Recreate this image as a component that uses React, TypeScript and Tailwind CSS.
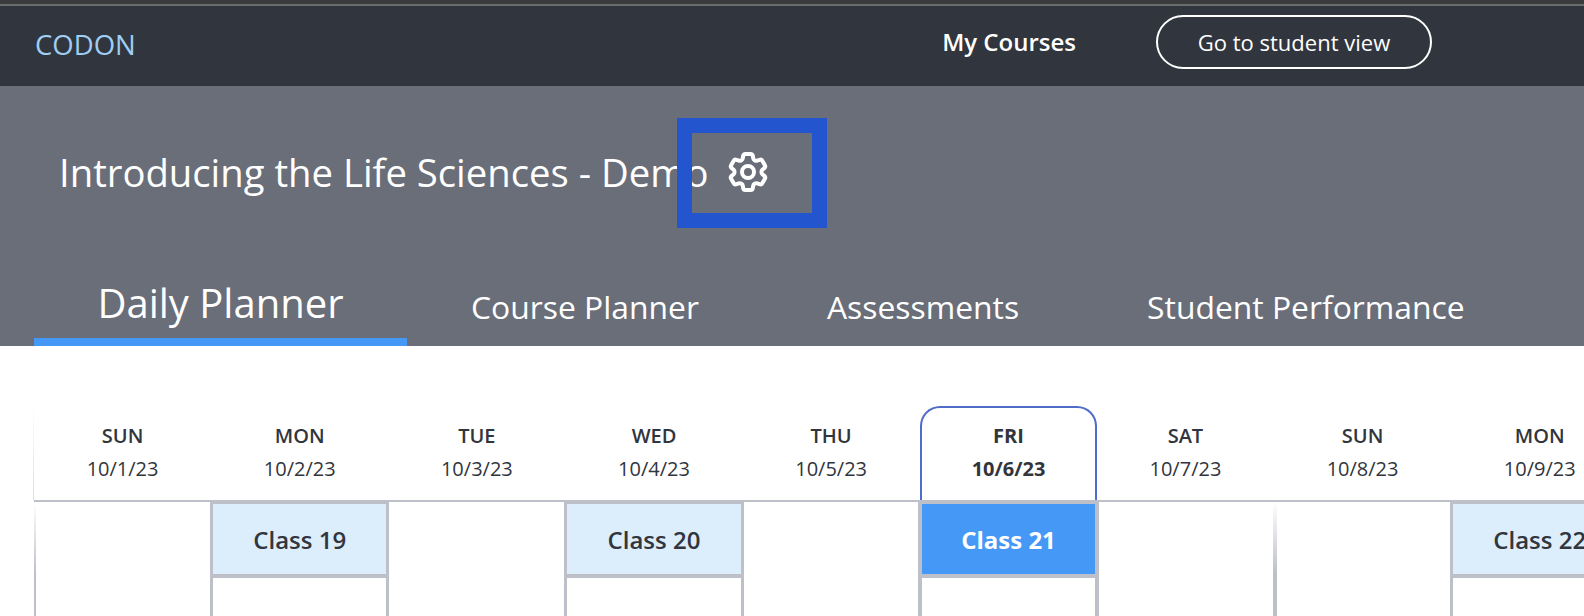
import { HiOutlineCog6Tooth } from 'react-icons/hi2';
import clsx from 'clsx';

type Day = {
  name: string;
  date: string;
  session?: string;
  current?: boolean;
  fade?: 'thin' | 'wide';
};

const days: Day[] = [
  { name: 'SUN', date: '10/1/23', fade: 'thin' },
  { name: 'MON', date: '10/2/23', session: 'Class 19' },
  { name: 'TUE', date: '10/3/23' },
  { name: 'WED', date: '10/4/23', session: 'Class 20' },
  { name: 'THU', date: '10/5/23' },
  { name: 'FRI', date: '10/6/23', session: 'Class 21', current: true },
  { name: 'SAT', date: '10/7/23' },
  { name: 'SUN', date: '10/8/23', fade: 'wide' },
  { name: 'MON', date: '10/9/23', session: 'Class 22' },
];

const tabs = ['Course Planner', 'Assessments', 'Student Performance'];

function DayHead({ day }: { day: Day }) {
  return (
    <div
      className={clsx(
        'w-[177.15px] shrink-0 h-[94px] flex flex-col items-center text-[#31353d] box-border',
        day.current
          ? 'border-2 border-b-0 border-[#4f6cc9] rounded-t-[20px] pt-[16px] bg-white ml-[0.25px] -mr-[0.25px]'
          : 'pt-[18px]'
      )}
    >
      <div className={clsx('text-[20px] leading-[24px]', day.current ? 'font-bold' : 'font-semibold')}>
        {day.name}
      </div>
      <div className={clsx('text-[20px] leading-[24px] mt-[9px]', day.current && 'font-bold')}>
        {day.date}
      </div>
    </div>
  );
}

function DayBody({ day }: { day: Day }) {
  if (!day.session) {
    return (
      <div className="w-[177.15px] shrink-0 relative h-full">
        {day.fade && (
          <div
            className={clsx(
              'absolute top-0 bottom-0 bg-gradient-to-b from-white to-[#bdc0c9] to-60%',
              day.fade === 'thin' ? 'left-0 w-[2px]' : '-left-[1px] w-[4px]'
            )}
          />
        )}
      </div>
    );
  }
  return (
    <div
      className={clsx(
        'shrink-0 h-full box-border',
        day.current
          ? 'w-[181.15px] -ml-[1.75px] -mr-[2.25px] border-x-[4px] border-[#bdc0c9]'
          : 'w-[179.15px] -ml-[1px] -mr-[1px] border-x-[3px] border-[#bdc0c9]'
      )}
    >
      <div
        className={clsx(
          'h-[77px] -mt-[1px] pt-[1px] flex items-center justify-center border-t-[3px] border-b-[4px] border-[#bdc0c9] text-[24px]',
          day.current
            ? 'bg-[#4598f6] text-white font-bold'
            : 'bg-[#dcedfc] text-[#31353d] font-semibold'
        )}
      >
        {day.session}
      </div>
    </div>
  );
}

export default function App() {
  return (
    <div className="w-[1584px] h-[616px] overflow-hidden bg-white relative font-['Open_Sans',sans-serif]">
      <div className="h-[4px] bg-[#3a3b3d]" />
      <div className="h-[2px] bg-[#6b6c6e]" />

      <div className="h-[80px] bg-[#31353d] flex items-center pl-[35px]">
        <div className="text-[27.5px] text-[#9fcdf3] -mt-[2px]">CODON</div>
        <div className="ml-auto text-[24px] font-semibold text-white mr-[80px] -mt-[8px]">My Courses</div>
        <div className="w-[276px] h-[54px] mr-[152px] -mt-[8px] rounded-full border-2 border-white flex items-center justify-center text-white text-[22px]">
          Go to student view
        </div>
      </div>

      <div className="h-[260px] bg-[#696e79] flex flex-col">
        <div className="flex items-center h-[172px] pl-[59px] text-white">
          <div className="text-[38.25px] pt-[2px]">Introducing the Life Sciences - Demo</div>
          <HiOutlineCog6Tooth size={48} strokeWidth={2} className="ml-[15px]" />
        </div>
        <div className="flex-1 flex items-end pl-[34px]">
          <div className="w-[373px] h-[80px] pt-[2px] border-b-[8px] border-[#4598f6] text-white text-[40px] flex items-center justify-center">
            Daily Planner
          </div>
          <div className="flex text-white text-[31.85px] h-[80px] items-center pl-[64px] gap-[128px] pt-[2px]">
            {tabs.map((tab) => (
              <div key={tab}>{tab}</div>
            ))}
          </div>
        </div>
      </div>

      <div className="pl-[34px] pt-[60px] relative">
        <div className="flex border-b-2 border-[#bdc0c9] h-[96px]">
          {days.map((day, i) => (
            <DayHead key={i} day={day} />
          ))}
        </div>
        <div className="flex h-[120px]">
          {days.map((day, i) => (
            <DayBody key={i} day={day} />
          ))}
        </div>
        <div className="absolute left-[33px] top-[60px] h-[94px] w-[1px] bg-gradient-to-b from-white to-[#dcdde1]" />
      </div>

      <div className="absolute left-[677px] top-[118px] w-[150px] h-[110px] border-[15px] border-[#2355cf]" />
    </div>
  );
}
